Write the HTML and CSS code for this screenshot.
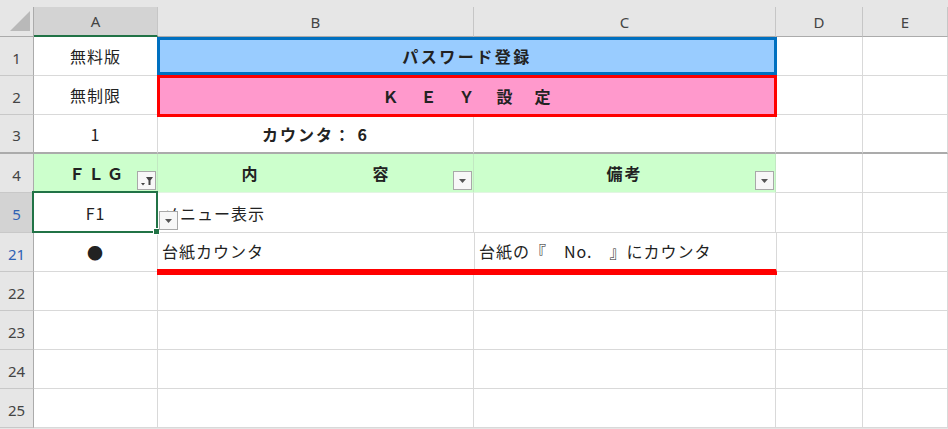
FILE: index.html
```
<!DOCTYPE html>
<html lang="ja">
<head>
  <meta charset="UTF-8">
  <title>パスワード登録</title>
  <link rel="stylesheet" href="styles.css">
</head>
<body>
  <div class="sheet">
    <!-- 列見出し -->
    <div class="corner">
      <svg width="20" height="20" viewBox="0 0 20 20"><polygon points="0,20 20,20 20,0" fill="#b9b9b9"/></svg>
    </div>
    <div class="col-head active">A</div>
    <div class="col-head">B</div>
    <div class="col-head">C</div>
    <div class="col-head">D</div>
    <div class="col-head">E</div>

    <!-- 1 -->
    <div class="row-head">1</div>
    <div class="cell center">無料版</div>
    <div class="cell merged title-blue">パスワード登録</div>
    <div class="cell"></div>
    <div class="cell"></div>

    <!-- 2 -->
    <div class="row-head">2</div>
    <div class="cell center">無制限</div>
    <div class="cell merged title-pink">
      <span>Ｋ</span><span>Ｅ</span><span>Ｙ</span><span>設</span><span>定</span>
    </div>
    <div class="cell"></div>
    <div class="cell"></div>

    <!-- 3 -->
    <div class="row-head freeze">3</div>
    <div class="cell center freeze">1</div>
    <div class="cell center bold freeze">カウンタ： 6</div>
    <div class="cell freeze"></div>
    <div class="cell freeze"></div>
    <div class="cell freeze"></div>

    <!-- 4 見出し行 -->
    <div class="row-head">4</div>
    <div class="cell center head-cell">
      <span class="flg">ＦＬＧ</span>
      <span class="drop filtered">
        <svg width="17" height="17" viewBox="0 0 17 17">
          <polygon points="3,11 7,11 5,13.5" fill="#444"/>
          <polygon points="8,5 15,5 12.5,8.5 12.5,13 10.5,13 10.5,8.5" fill="#444"/>
        </svg>
      </span>
    </div>
    <div class="cell head-cell spread">
      <span>内</span><span>容</span>
      <span class="drop"><svg width="17" height="17" viewBox="0 0 17 17"><polygon points="5,7 12,7 8.5,11" fill="#555"/></svg></span>
    </div>
    <div class="cell center bold head-cell">
      備考
      <span class="drop"><svg width="17" height="17" viewBox="0 0 17 17"><polygon points="5,7 12,7 8.5,11" fill="#555"/></svg></span>
    </div>
    <div class="cell"></div>
    <div class="cell"></div>

    <!-- 5 -->
    <div class="row-head selected filtered-row">5</div>
    <div class="cell center active-cell">
      F1
      <span class="drop list-drop"><svg width="17" height="17" viewBox="0 0 17 17"><polygon points="5,7 12,7 8.5,11" fill="#555"/></svg></span>
    </div>
    <div class="cell text">メニュー表示</div>
    <div class="cell"></div>
    <div class="cell"></div>
    <div class="cell"></div>

    <!-- 21 -->
    <div class="row-head filtered-row">21</div>
    <div class="cell center">●</div>
    <div class="cell text underline first">台紙カウンタ</div>
    <div class="cell text underline">台紙の『　No.　』にカウンタ</div>
    <div class="cell"></div>
    <div class="cell"></div>

    <div class="row-head">22</div>
    <div class="cell"></div><div class="cell"></div><div class="cell"></div><div class="cell"></div><div class="cell"></div>
    <div class="row-head">23</div>
    <div class="cell"></div><div class="cell"></div><div class="cell"></div><div class="cell"></div><div class="cell"></div>
    <div class="row-head">24</div>
    <div class="cell"></div><div class="cell"></div><div class="cell"></div><div class="cell"></div><div class="cell"></div>
    <div class="row-head">25</div>
    <div class="cell"></div><div class="cell"></div><div class="cell"></div><div class="cell"></div><div class="cell"></div>
  </div>
</body>
</html>
```

FILE: styles.css
```
body {
  margin: 0;
  background: #e6e6e6;
  font-family: "Noto Sans CJK JP", sans-serif;
  overflow: hidden;
}
.sheet {
  display: grid;
  grid-template-columns: 34px 124px 316px 302px 87px 85px;
  grid-template-rows: 30px repeat(4, 39px) 40px;
  grid-auto-rows: 39px;
  margin-top: 7px;
  background: #fff;
}

/* 見出し */
.corner {
  background: #e6e6e6;
  border-right: 1px solid #ababab;
  border-bottom: 1px solid #ababab;
  box-sizing: border-box;
  display: flex;
  justify-content: flex-end;
  align-items: flex-end;
  padding: 0 3px 5px 0;
}
.col-head {
  background: #e6e6e6;
  border-right: 1px solid #c6c6c6;
  border-bottom: 1px solid #ababab;
  box-sizing: border-box;
  display: flex;
  align-items: center;
  justify-content: center;
  font-family: "Noto Sans", sans-serif;
  font-size: 15px;
  color: #444;
}
.col-head.active {
  background: #d3d3d3;
  border-bottom: 2px solid #217346;
}
.row-head {
  background: #e6e6e6;
  border-right: 1px solid #ababab;
  border-bottom: 1px solid #c8c8c8;
  box-sizing: border-box;
  display: flex;
  align-items: center;
  justify-content: center;
  padding-top: 3px;
  font-family: "Noto Sans", sans-serif;
  font-size: 15px;
  color: #444;
}
.row-head.selected {
  background: #d3d3d3;
}
.row-head.filtered-row {
  color: #2f62b4;
}

/* セル */
.cell {
  position: relative;
  border-right: 1px solid #d9d9d9;
  border-bottom: 1px solid #d9d9d9;
  box-sizing: border-box;
  display: flex;
  align-items: center;
  font-size: 16px;
  letter-spacing: 1px;
  color: #222;
}
.center { justify-content: center; }
.bold { font-weight: bold; letter-spacing: 2px; }
.text { padding-left: 5px; }
.freeze { border-bottom: 2px solid #ababab; }

.merged {
  grid-column: span 2;
  justify-content: center;
  margin: 0 -1px;
  z-index: 1;
  font-weight: bold;
}
.title-blue {
  background: #99ccff;
  border: 3px solid #0070c0;
  border-bottom-width: 4px;
  letter-spacing: 2.5px;
}
.title-pink {
  background: #ff99cc;
  border: 3px solid #ff0000;
  margin-top: -1px;
  margin-bottom: -2px;
  gap: 21px;
}

.head-cell {
  background: #ccffcc;
  border-right-color: #c2e8c2;
  border-bottom-color: #e2f5e2;
}
.flg { letter-spacing: 3px; margin-left: 4px; font-weight: bold; }
.spread { justify-content: center; gap: 114px; font-weight: bold; }

/* フィルターボタン */
.drop {
  position: absolute;
  right: 1px;
  bottom: 2px;
  width: 19px;
  height: 19px;
  box-sizing: border-box;
  background: #f7f7f7;
  border: 1px solid #a8a8a8;
  display: flex;
  align-items: center;
  justify-content: center;
}
.list-drop {
  right: -21px;
  bottom: 2px;
  z-index: 3;
}

/* 選択セル */
.active-cell::after {
  content: "";
  position: absolute;
  left: -2px;
  top: -2px;
  right: -1px;
  bottom: -1px;
  border: 2px solid #217346;
  z-index: 2;
}
.active-cell::before {
  content: "";
  position: absolute;
  right: -3px;
  bottom: -3px;
  width: 5px;
  height: 5px;
  background: #217346;
  border: 1px solid #fff;
  z-index: 3;
}

.underline {
  border-bottom: 3px solid #ff0000;
  box-shadow: 0 3px 0 #ff0000;
  margin-right: -1px;
  z-index: 1;
}
.underline.first {
  margin-left: -1px;
}
```
